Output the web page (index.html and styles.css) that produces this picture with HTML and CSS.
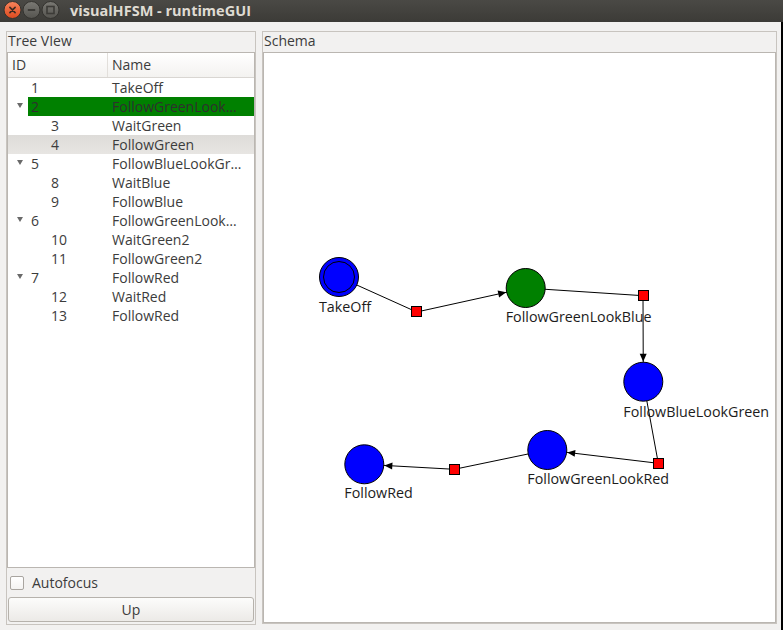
FILE: index.html
```html
<!DOCTYPE html>
<html>
<head>
<meta charset="utf-8">
<title>visualHFSM - runtimeGUI</title>
<link rel="stylesheet" href="styles.css">
</head>
<body>
<div class="titlebar">
  <svg class="wbtns" width="64" height="22" viewBox="0 0 64 22">
    <defs>
      <linearGradient id="og" x1="0" y1="0" x2="0" y2="1">
        <stop offset="0" stop-color="#f7845c"/>
        <stop offset="1" stop-color="#dc4a1e"/>
      </linearGradient>
      <linearGradient id="gg" x1="0" y1="0" x2="0" y2="1">
        <stop offset="0" stop-color="#7a7974"/>
        <stop offset="1" stop-color="#55544f"/>
      </linearGradient>
    </defs>
    <circle cx="12.5" cy="10" r="8.5" fill="url(#og)" stroke="#34332f" stroke-width="1"/>
    <path d="M9.9 7.4 L15.1 12.6 M15.1 7.4 L9.9 12.6" stroke="#3a2a22" stroke-width="1.6" stroke-linecap="round"/>
    <circle cx="31.5" cy="10" r="8.5" fill="url(#gg)" stroke="#34332f" stroke-width="1"/>
    <path d="M27.8 10 H35.2" stroke="#3c3b37" stroke-width="2"/>
    <circle cx="50.5" cy="10" r="8.5" fill="url(#gg)" stroke="#34332f" stroke-width="1"/>
    <rect x="47" y="6.5" width="7" height="7" fill="none" stroke="#3c3b37" stroke-width="1.6"/>
  </svg>
  <div class="title">visualHFSM - runtimeGUI</div>
</div>
<div class="main">
  <section class="group left">
    <div class="ghead">Tree VIew</div>
    <div class="tree">
      <div class="thead"><div class="th th-id">ID</div><div class="th th-name">Name</div></div>
      <div class="row lvl0"><div class="br"></div><div class="item"><div class="idc">1</div><div class="nm">TakeOff</div></div></div>
      <div class="row lvl0 sel"><div class="br"><span class="arrow"></span></div><div class="item"><div class="idc">2</div><div class="nm">FollowGreenLook…</div></div></div>
      <div class="row lvl1"><div class="br"></div><div class="item"><div class="idc">3</div><div class="nm">WaitGreen</div></div></div>
      <div class="row lvl1 hover"><div class="br"></div><div class="item"><div class="idc">4</div><div class="nm">FollowGreen</div></div></div>
      <div class="row lvl0"><div class="br"><span class="arrow"></span></div><div class="item"><div class="idc">5</div><div class="nm">FollowBlueLookGr…</div></div></div>
      <div class="row lvl1"><div class="br"></div><div class="item"><div class="idc">8</div><div class="nm">WaitBlue</div></div></div>
      <div class="row lvl1"><div class="br"></div><div class="item"><div class="idc">9</div><div class="nm">FollowBlue</div></div></div>
      <div class="row lvl0"><div class="br"><span class="arrow"></span></div><div class="item"><div class="idc">6</div><div class="nm">FollowGreenLook…</div></div></div>
      <div class="row lvl1"><div class="br"></div><div class="item"><div class="idc">10</div><div class="nm">WaitGreen2</div></div></div>
      <div class="row lvl1"><div class="br"></div><div class="item"><div class="idc">11</div><div class="nm">FollowGreen2</div></div></div>
      <div class="row lvl0"><div class="br"><span class="arrow"></span></div><div class="item"><div class="idc">7</div><div class="nm">FollowRed</div></div></div>
      <div class="row lvl1"><div class="br"></div><div class="item"><div class="idc">12</div><div class="nm">WaitRed</div></div></div>
      <div class="row lvl1"><div class="br"></div><div class="item"><div class="idc">13</div><div class="nm">FollowRed</div></div></div>
    </div>
    <label class="cbrow"><span class="cb"></span><span class="cbtext">Autofocus</span></label>
    <button class="btn">Up</button>
  </section>
  <section class="group right">
    <div class="ghead">Schema</div>
    <div class="canvas">
      <svg class="schema" width="511" height="569" viewBox="0 0 511 569">
        <g transform="translate(-264 -53)">
          <g class="edges" stroke="#000" stroke-width="1" fill="none">
            <path d="M339 277 L416.7 312"/>
            <path d="M416.7 312 L525.7 288"/>
            <path d="M525.7 288 L643 295.7"/>
            <path d="M643 295.7 L643.3 381.7"/>
            <path d="M643.3 381.7 L658.3 463.3"/>
            <path d="M658.3 463.3 L547.3 450"/>
            <path d="M547.3 450 L454.3 469.3"/>
            <path d="M454.3 469.3 L364.3 464.3"/>
          </g>
          <g class="nodes" stroke="#000" stroke-width="1">
            <circle cx="339" cy="277" r="19.5" fill="#0000ff"/>
            <circle cx="339" cy="277" r="15.5" fill="none"/>
            <circle cx="525.7" cy="288" r="19.5" fill="#008000"/>
            <circle cx="643.3" cy="381.7" r="19.5" fill="#0000ff"/>
            <circle cx="547.3" cy="450" r="19.5" fill="#0000ff"/>
            <circle cx="364.3" cy="464.3" r="19.5" fill="#0000ff"/>
          </g>
          <g class="arrows" fill="#000">
            <polygon points="506.2,292.3 499.1,297.4 497.6,290.6"/>
            <polygon points="643.2,361.7 646.7,353.7 639.7,353.7"/>
            <polygon points="567.2,452.4 575.5,449.9 574.7,456.8"/>
            <polygon points="384.3,465.4 392.5,462.4 392.1,469.4"/>
          </g>
          <g class="trans" fill="#ff0000" stroke="#000" stroke-width="1">
            <rect x="411.5" y="306.5" width="10" height="10"/>
            <rect x="638.5" y="290.5" width="10" height="10"/>
            <rect x="653.5" y="458.5" width="10" height="10"/>
            <rect x="449.5" y="464.5" width="10" height="10"/>
          </g>
          <g class="labels">
            <text x="319" y="311.5">TakeOff</text>
            <text x="505.7" y="322.3">FollowGreenLookBlue</text>
            <text x="623.3" y="416.5">FollowBlueLookGreen</text>
            <text x="527.3" y="484">FollowGreenLookRed</text>
            <text x="344.3" y="498.3">FollowRed</text>
          </g>
        </g>
      </svg>
    </div>
  </section>
</div>
</body>
</html>
```
FILE: styles.css
```css
* { box-sizing: border-box; }
html, body { margin: 0; padding: 0; }
body {
  width: 783px;
  height: 630px;
  overflow: hidden;
  background: #f2f1f0;
  font-family: "Open Sans", "DejaVu Sans", sans-serif;
  font-size: 14px;
  color: #3c3c3c;
}

.titlebar {
  height: 22px;
  display: flex;
  align-items: center;
  background: linear-gradient(#4a4945, #3c3b37);
}
.wbtns { display: block; flex: none; }
.title {
  margin-left: 6px;
  font-family: "Open Sans", "DejaVu Sans", sans-serif;
  font-weight: 700;
  font-size: 14.5px;
  line-height: 22px;
  color: #dfdbd2;
  white-space: nowrap;
}

.main {
  display: flex;
  align-items: flex-start;
  width: 783px;
  height: 608px;
  padding: 9px 0 0 6px;
  border-right: 2px solid #000;
}

.group {
  display: flex;
  flex-direction: column;
  border: 1px solid #c8c4bf;
}
.left { width: 250px; height: 594px; flex: none; }
.right { width: 515px; height: 593px; margin-left: 6px; flex: none; }

.ghead {
  height: 20px;
  line-height: 18px;
  padding-left: 1px;
  white-space: nowrap;
}

.tree {
  height: 516px;
  border: 1px solid #bab6b1;
  background: #fff;
  overflow: hidden;
}
.thead {
  display: flex;
  height: 25px;
  border-bottom: 1px solid #d9d6d2;
  background: linear-gradient(#ffffff, #f3f2f0);
  line-height: 24px;
}
.th-id { width: 100px; padding-left: 4px; border-right: 1px solid #e2dfdb; }
.th-name { flex: 1; padding-left: 4px; }

.row {
  display: flex;
  height: 19px;
  line-height: 19px;
  white-space: nowrap;
}
.br { flex: none; position: relative; }
.lvl0 .br { width: 20px; }
.lvl1 .br { width: 40px; }
.item { flex: 1; display: flex; min-width: 0; }
.idc { flex: none; padding-left: 3px; }
.lvl0 .idc { width: 80px; }
.lvl1 .idc { width: 60px; }
.nm { flex: 1; min-width: 0; padding-left: 4px; overflow: hidden; }

.sel .item { background: #008000; color: #2f2f2f; }
.hover { background: linear-gradient(#dedcd9, #e7e5e2); }

.arrow {
  position: absolute;
  left: 9px;
  top: 6px;
  width: 0;
  height: 0;
  border-left: 3.5px solid transparent;
  border-right: 3.5px solid transparent;
  border-top: 5px solid #6a6a6a;
}

.cbrow {
  display: flex;
  align-items: center;
  height: 29px;
  padding-left: 3px;
  line-height: 19px;
}
.cb {
  width: 14px;
  height: 14px;
  border: 1px solid #a9a5a0;
  border-radius: 2px;
  background: linear-gradient(#ffffff, #f4f3f2);
  flex: none;
}
.cbtext { margin-left: 8px; }

.btn {
  height: 25px;
  margin: 0 1px;
  border: 1px solid #b6b2ac;
  border-radius: 3px;
  background: linear-gradient(#fcfcfb, #eceae7);
  font-family: "Open Sans", "DejaVu Sans", sans-serif;
  font-size: 14px;
  color: #3c3c3c;
  padding: 0;
  line-height: 22px;
}

.canvas {
  height: 571px;
  border: 1px solid #bab6b1;
  background: #fff;
}
.schema { display: block; }
.labels text {
  font-family: "Open Sans", "DejaVu Sans", sans-serif;
  font-size: 14.3px;
  fill: #1c1c1c;
}
```
